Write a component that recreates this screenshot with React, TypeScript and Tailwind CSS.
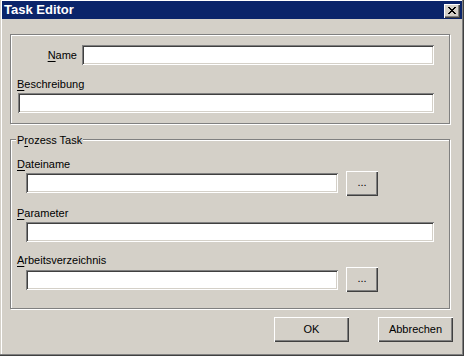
const sunken =
  "bg-white shadow-[inset_1px_1px_0_#808080,inset_-1px_-1px_0_#fff,inset_2px_2px_0_#404040,inset_-2px_-2px_0_#d4d0c8]";
const raised =
  "bg-[#d4d0c8] shadow-[inset_1px_1px_0_#fff,inset_-1px_-1px_0_#404040,inset_-2px_-2px_0_#808080]";
const etched =
  "border border-[#808080] shadow-[inset_1px_1px_0_#fff,1px_1px_0_#fff]";

const Label = ({ acc, rest, className = "" }: { acc: string; rest: string; className?: string }) => (
  <div className={`h-[13px] leading-[13px] whitespace-nowrap ${className}`}>
    <span className="underline underline-offset-[2px]">{acc}</span>
    {rest}
  </div>
);

const BrowseButton = () => (
  <button className={`${raised} w-[32px] h-[25px] ml-[8px] flex items-center justify-center leading-none pb-[2px]`}>
    ...
  </button>
);

const CloseGlyph = () => (
  <svg width="8" height="7" viewBox="0 0 8 7" shapeRendering="crispEdges">
    <path
      fill="#000"
      d="M0 0h2v1H0zM6 0h2v1H6zM1 1h2v1H1zM5 1h2v1H5zM2 2h4v1H2zM3 3h2v1H3zM2 4h4v1H2zM1 5h2v1H1zM5 5h2v1H5zM0 6h2v1H0zM6 6h2v1H6z"
    />
  </svg>
);

export default function App() {
  return (
    <div
      className="w-[464px] h-[356px] bg-[#d4d0c8] text-black text-[11px] overflow-hidden shadow-[inset_-1px_-1px_0_#404040,inset_-2px_-2px_0_#808080,inset_1px_0_0_#d4d0c8,inset_2px_1px_0_#fff]"
      style={{ fontFamily: '"Liberation Sans", Arial, sans-serif' }}
    >
      {/* title bar */}
      <div className="mx-[2px] pt-[1px]">
        <div className="h-[18px] bg-[#0a246a] flex items-start justify-between pl-[2px] pr-[2px]">
          <span className="text-white font-bold text-[13px] leading-[18px]">Task Editor</span>
          <div className={`${raised} w-[16px] h-[14px] mt-[3px] flex items-start pl-[4px] pt-[3px]`}>
            <CloseGlyph />
          </div>
        </div>
      </div>

      <div className="ml-[10px] w-[440px]">
        {/* group 1 */}
        <div className={`${etched} mt-[15px] h-[90px]`}>
          <div className="flex items-center mt-[10px]">
            <div className="w-[66px] text-right leading-[13px]">
              <span className="underline underline-offset-[2px]">N</span>ame
            </div>
            <div className={`${sunken} ml-[5px] w-[352px] h-[20px]`} />
          </div>
          <Label acc="B" rest="eschreibung" className="ml-[6px] mt-[13px]" />
          <div className={`${sunken} ml-[7px] mt-[2px] w-[416px] h-[20px]`} />
        </div>

        {/* group 2 */}
        <div className={`${etched} relative mt-[15px] h-[170px]`}>
          <span className="absolute top-[-6px] left-[5px] px-[1px] bg-[#d4d0c8] leading-[13px]">
            P<span className="underline underline-offset-[2px]">r</span>ozess Task
          </span>
          <Label acc="D" rest="ateiname" className="ml-[6px] mt-[18px]" />
          <div className="flex items-start">
            <div className={`${sunken} ml-[15px] mt-[2px] w-[312px] h-[20px]`} />
            <BrowseButton />
          </div>
          <Label acc="P" rest="arameter" className="ml-[6px] mt-[11px]" />
          <div className={`${sunken} ml-[15px] mt-[2px] w-[408px] h-[20px]`} />
          <Label acc="A" rest="rbeitsverzeichnis" className="ml-[6px] mt-[12px]" />
          <div className="flex items-start">
            <div className={`${sunken} ml-[15px] mt-[3px] w-[312px] h-[20px]`} />
            <BrowseButton />
          </div>
        </div>
      </div>

      {/* dialog buttons */}
      <div className="flex justify-end gap-[29px] pr-[11px] mt-[8px]">
        <button className={`${raised} w-[75px] h-[25px] leading-none`}>OK</button>
        <button className={`${raised} w-[75px] h-[25px] leading-none`}>Abbrechen</button>
      </div>
    </div>
  );
}
